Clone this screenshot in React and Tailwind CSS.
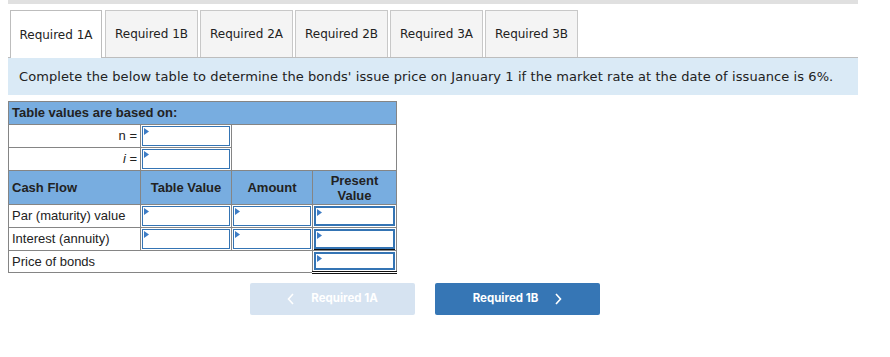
import React from 'react';

const tabs = ['Required 1A', 'Required 1B', 'Required 2A', 'Required 2B', 'Required 3A', 'Required 3B'];

function Marker() {
  return (
    <svg className="absolute left-[1px] top-[1px]" width="5" height="7" viewBox="0 0 5 7">
      <path d="M0 0 L5 3.5 L0 7 Z" fill="#3d7cc4" />
    </svg>
  );
}

function Box({ extra = '' }) {
  return (
    <div className={`relative h-full w-full border border-[#3474b4] bg-white ${extra}`}>
      <Marker />
    </div>
  );
}

export default function App() {
  const cell = 'border border-[#858585] p-0';
  const inCell = `${cell} h-[23px] py-[1px] pl-[1px] pr-[1px]`;
  return (
    <div className="w-[890px] h-[357px] bg-white" style={{ fontFamily: '"DejaVu Sans", Verdana, sans-serif' }}>
      <div className="mx-2 w-[850px]">
        <div className="h-1 bg-[#e0e0e0]" />

        {/* tabs */}
        <div className="mt-[7px] flex items-end pl-[2px] border-b border-[#bdbdbd] h-[47px]">
          {tabs.map((t, i) => (
            <div
              key={t}
              className={
                i === 0
                  ? 'mr-[3px] -mb-px flex h-[48px] w-[92px] items-center justify-center border border-b-0 border-[#bdbdbd] bg-white text-[12px] text-[#222]'
                  : 'mr-[2px] flex h-[47px] w-[93px] items-center justify-center border border-b-0 border-[#c8c8c8] bg-[#f4f4f4] text-[12px] text-[#222]'
              }
            >
              {t}
            </div>
          ))}
        </div>

        {/* banner */}
        <div className="flex h-[37px] items-center bg-[#daeaf6] pl-[11px] text-[13px] tracking-[0.08px] text-[#222]">
          Complete the below table to determine the bonds' issue price on January 1 if the market rate at the date of issuance is 6%.
        </div>

        {/* table */}
        <table
          className="mt-[6px] border-collapse text-[13px] text-[#222]"
          style={{ fontFamily: '"Liberation Sans", Arial, sans-serif' }}
        >
          <colgroup>
            <col className="w-[132px]" />
            <col className="w-[91px]" />
            <col className="w-[81px]" />
            <col className="w-[84px]" />
          </colgroup>
          <tbody>
            <tr className="h-[23px]">
              <td colSpan={4} className={`${cell} bg-[#78ade0] pl-[3px] font-bold text-[#222]`}>
                Table values are based on:
              </td>
            </tr>
            <tr className="h-[23px]">
              <td className={`${cell} pr-[3px] text-right`}>n =</td>
              <td className={inCell}><Box /></td>
              <td rowSpan={2} colSpan={2} className={cell} />
            </tr>
            <tr className="h-[23px]">
              <td className={`${cell} pr-[3px] text-right`}><i>i</i> =</td>
              <td className={inCell}><Box /></td>
            </tr>
            <tr className="h-[34px] bg-[#78ade0] font-bold">
              <td className={`${cell} pl-[3px]`}>Cash Flow</td>
              <td className={`${cell} text-center`}>Table Value</td>
              <td className={`${cell} text-center`}>Amount</td>
              <td className={`${cell} text-center leading-[15px]`}>Present<br />Value</td>
            </tr>
            <tr className="h-[23px]">
              <td className={`${cell} pl-[3px]`}>Par (maturity) value</td>
              <td className={inCell}><Box /></td>
              <td className={inCell}><Box /></td>
              <td className={inCell}><Box extra="border-2" /></td>
            </tr>
            <tr className="h-[23px]">
              <td className={`${cell} pl-[3px]`}>Interest (annuity)</td>
              <td className={inCell}><Box /></td>
              <td className={inCell}><Box /></td>
              <td className={`${cell} h-[23px] pt-[1px] px-[1px] pb-0`}>
                <div className="h-full border-b border-[#111]"><Box extra="border-2" /></div>
              </td>
            </tr>
            <tr className="h-[22px]">
              <td colSpan={3} className={`${cell} pl-[3px]`}>Price of bonds</td>
              <td className={`${cell} h-[22px] p-[1px] border-b-[3px] border-b-[#111] border-double`}>
                <Box extra="border-2" />
              </td>
            </tr>
          </tbody>
        </table>

        {/* navigation */}
        <div
          className="mt-[9px] flex gap-5 pl-[242px]"
          style={{ fontFamily: 'Inter, "Liberation Sans", sans-serif' }}
        >
          <div className="flex h-[32px] w-[165px] items-center justify-center gap-4 rounded-[2px] bg-[#d6e3f1] text-[11.5px] font-bold text-white">
            <svg width="8" height="12" viewBox="0 0 8 12"><path d="M6 1 L1.5 6 L6 11" stroke="white" strokeWidth="1.6" fill="none" /></svg>
            <span>Required 1A</span>
          </div>
          <div className="flex h-[32px] w-[165px] items-center justify-center gap-4 rounded-[2px] bg-[#3676b5] text-[11.5px] font-bold text-white">
            <span>Required 1B</span>
            <svg width="8" height="12" viewBox="0 0 8 12"><path d="M2 1 L6.5 6 L2 11" stroke="white" strokeWidth="1.6" fill="none" /></svg>
          </div>
        </div>
      </div>
    </div>
  );
}
